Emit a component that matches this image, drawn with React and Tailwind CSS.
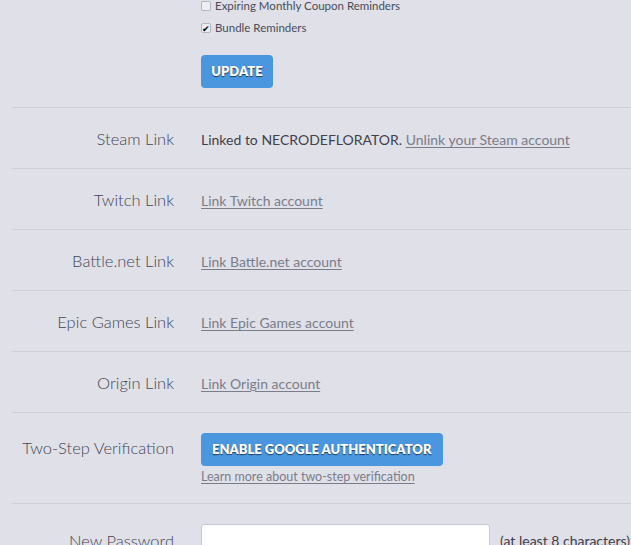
import React from "react";

const font = { fontFamily: "Lato, 'Open Sans', sans-serif" };

function Row({ label, children, className = "" }) {
  return (
    <div className={"flex items-center border-b border-[#cdd0d9] h-[61px] pt-[3px] " + className}>
      <div className="w-[162px] text-right text-[16.5px] font-light text-[#454755]">{label}</div>
      <div className="ml-[27px] text-[14px] text-[#3f414c]">{children}</div>
    </div>
  );
}

function LinkText({ children }) {
  return <a className="underline text-[#7b7d8b] underline-offset-2 cursor-pointer">{children}</a>;
}

export default function App() {
  return (
    <div className="w-[631px] h-[545px] overflow-hidden bg-[#dfe0e8]" style={font}>
      <div className="ml-[12px]">
        <div className="border-b border-[#cdd0d9] pl-[189px] pb-[19px] -mt-[5px]">
          <label className="flex items-center h-[22px] text-[11.5px] text-[#4a4c58]">
            <span className="w-[10px] h-[10px] border border-[#b5b7c0] bg-[#eeeef2] rounded-[2px] mr-[4px]"></span>
            Expiring Monthly Coupon Reminders
          </label>
          <label className="flex items-center h-[22px] text-[11.5px] text-[#4a4c58]">
            <span className="w-[10px] h-[10px] border border-[#b5b7c0] bg-[#eeeef2] rounded-[2px] mr-[4px] flex items-center justify-center text-[9px] leading-none text-black">✔</span>
            Bundle Reminders
          </label>
          <button className="mt-[16px] h-[33px] w-[72px] rounded-[4px] bg-[#4a97df] text-white font-extrabold text-[13px] [text-shadow:0_1px_1px_rgba(0,0,0,0.6)]">
            UPDATE
          </button>
        </div>

        <Row label="Steam Link">
          Linked to NECRODEFLORATOR. <LinkText>Unlink your Steam account</LinkText>
        </Row>
        <Row label="Twitch Link">
          <LinkText>Link Twitch account</LinkText>
        </Row>
        <Row label="Battle.net Link">
          <LinkText>Link Battle.net account</LinkText>
        </Row>
        <Row label="Epic Games Link">
          <LinkText>Link Epic Games account</LinkText>
        </Row>
        <Row label="Origin Link">
          <LinkText>Link Origin account</LinkText>
        </Row>

        <div className="flex items-start border-b border-[#cdd0d9] h-[91px] pt-[20px]">
          <div className="w-[162px] text-right text-[16.5px] font-light text-[#454755] h-[33px] leading-[31px]">Two-Step Verification</div>
          <div className="ml-[27px] flex flex-col items-start">
            <button className="h-[33px] px-[11px] rounded-[4px] bg-[#4a97df] text-white font-extrabold text-[13px] [text-shadow:0_1px_1px_rgba(0,0,0,0.6)]">
              ENABLE GOOGLE AUTHENTICATOR
            </button>
            <a className="mt-[2px] text-[12.5px] underline text-[#7b7d8b] underline-offset-2">Learn more about two-step verification</a>
          </div>
        </div>

        <div className="flex items-start pt-[20px]">
          <div className="w-[162px] text-right text-[16.5px] font-light text-[#454755] h-[34px] leading-[34px]">New Password</div>
          <input type="password" className="ml-[27px] w-[289px] h-[34px] bg-white border border-[#c8cad3] rounded-[3px]" />
          <span className="ml-[10px] text-[14px] text-[#3f414c] whitespace-nowrap leading-[34px]">(at least 8 characters)</span>
        </div>
      </div>
    </div>
  );
}
